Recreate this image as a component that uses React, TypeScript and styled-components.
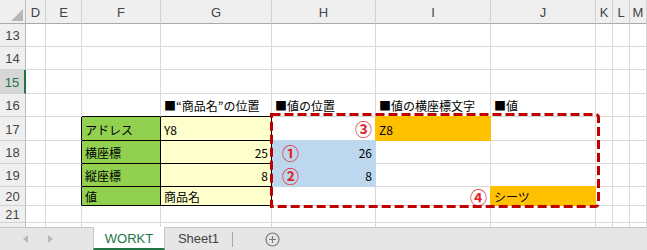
import { ReactNode } from "react";
import styled, { createGlobalStyle } from "styled-components";

const GRID = "#dadada";
const INK = "#000";
const GREEN = "#92d050";
const YELLOW = "#ffffcc";
const BLUE = "#bdd7ee";
const ORANGE = "#ffc000";
const RED = "#e0262b";
const EXCEL = "#217346";

const GlobalStyle = createGlobalStyle`
  html, body {
    margin: 0;
    padding: 0;
    background: #fff;
  }
  body {
    font-family: "Noto Sans CJK JP", "Liberation Sans", sans-serif;
    overflow: hidden;
  }
  * {
    box-sizing: border-box;
  }
`;

const Window = styled.div`
  width: 647px;
  height: 250px;
  display: flex;
  flex-direction: column;
  overflow: hidden;
`;

const Sheet = styled.div`
  position: relative;
  height: 227px;
  flex: 0 0 227px;
  overflow: hidden;
  display: grid;
  grid-template-columns: 26px 20px 36px 79px 111px 104px 115px 105px 17px 17px 17px;
  grid-template-rows: 24px 23px 23px 24px 23px 24px 23px 23px 19px 17px 20px;
`;

const Corner = styled.div`
  position: relative;
  background: #efefef;
  border-right: 1px solid #bdbdbd;
  border-bottom: 1px solid #a9a9a9;

  svg {
    position: absolute;
    right: 2px;
    bottom: 2px;
  }
`;

const ColHead = styled.div`
  background: #efefef;
  border-right: 1px solid #d2d2d2;
  border-bottom: 1px solid #a9a9a9;
  color: #444;
  font: 13px "Liberation Sans", sans-serif;
  display: flex;
  align-items: center;
  justify-content: center;
  overflow: hidden;
  padding-top: 1px;
`;

const RowHead = styled.div<{ $active?: boolean }>`
  background: ${p => (p.$active ? "#d6d6d6" : "#efefef")};
  color: ${p => (p.$active ? EXCEL : "#444")};
  border-right: ${p => (p.$active ? `2px solid ${EXCEL}` : "1px solid #bdbdbd")};
  border-bottom: 1px solid #d2d2d2;
  font: 13px "Liberation Sans", sans-serif;
  display: flex;
  align-items: center;
  justify-content: center;
  padding-top: 1px;
`;

const Cell = styled.div<{
  $fill?: string;
  $right: string;
  $bottom: string;
  $justify: string;
}>`
  background: ${p => p.$fill ?? "#fff"};
  border-right: 1px solid ${p => p.$right};
  border-bottom: 1px solid ${p => p.$bottom};
  display: flex;
  align-items: center;
  justify-content: ${p => p.$justify};
  padding: 2px 3px 0 3px;
  font-size: 12px;
  line-height: 1;
  color: #000;
  white-space: nowrap;
`;

const Mark = styled.span<{ $lead?: boolean }>`
  color: ${RED};
  font-size: 17px;
  font-weight: 700;
  line-height: 1;
  margin-left: ${p => (p.$lead ? "7px" : "0")};
  margin-top: -2px;
`;

const Frame = styled.svg`
  position: absolute;
  left: 270px;
  top: 113px;
  pointer-events: none;
`;

const TabBar = styled.div`
  flex: 1;
  background: #e6e6e6;
  border-top: 1px solid #c6c6c6;
  display: flex;
  align-items: stretch;
  font: 13px "Liberation Sans", sans-serif;
`;

const Nav = styled.div`
  width: 93px;
  display: flex;
  align-items: center;
  gap: 20px;
  padding-left: 23px;
  color: #b9b9b9;
`;

const Tab = styled.div<{ $active?: boolean; $width: number }>`
  width: ${p => p.$width}px;
  margin-top: -1px;
  display: flex;
  align-items: center;
  justify-content: center;
  background: ${p => (p.$active ? "#fff" : "transparent")};
  color: ${p => (p.$active ? EXCEL : "#444")};
  border-left: ${p => (p.$active ? "1px solid #c6c6c6" : "none")};
  border-right: ${p => (p.$active ? "1px solid #c6c6c6" : "none")};
  border-bottom: ${p => (p.$active ? `2px solid ${EXCEL}` : "none")};
  padding-top: ${p => (p.$active ? "2px" : "0")};
`;

const Divider = styled.div`
  width: 1px;
  height: 15px;
  align-self: center;
  background: #a8a8a8;
`;

const AddSheet = styled.div`
  margin-left: 32px;
  display: flex;
  align-items: center;
`;

type Spec = {
  text?: ReactNode;
  fill?: string;
  box?: boolean;
  justify?: string;
};

const COLS = ["D", "E", "F", "G", "H", "I", "J", "K", "L", "M"];
const ROWS = [
  { n: 13 },
  { n: 14 },
  { n: 15, active: true },
  { n: 16 },
  { n: 17 },
  { n: 18 },
  { n: 19 },
  { n: 20 },
  { n: 21 },
  { n: 22 },
];

const R = "flex-end";

const CELLS: Record<string, Spec> = {
  G16: { text: "■“商品名”の位置" },
  H16: { text: "■値の位置" },
  I16: { text: "■値の横座標文字" },
  J16: { text: "■値" },

  F17: { text: "アドレス", fill: GREEN, box: true },
  G17: { text: "Y8", fill: YELLOW, box: true },
  H17: { text: <Mark>③</Mark>, justify: R },
  I17: { text: "Z8", fill: ORANGE },

  F18: { text: "横座標", fill: GREEN, box: true },
  G18: { text: "25", fill: YELLOW, box: true, justify: R },
  H18: {
    text: (
      <>
        <Mark $lead>①</Mark>
        <span>26</span>
      </>
    ),
    fill: BLUE,
    justify: "space-between",
  },

  F19: { text: "縦座標", fill: GREEN, box: true },
  G19: { text: "8", fill: YELLOW, box: true, justify: R },
  H19: {
    text: (
      <>
        <Mark $lead>②</Mark>
        <span>8</span>
      </>
    ),
    fill: BLUE,
    justify: "space-between",
  },

  F20: { text: "値", fill: GREEN, box: true },
  G20: { text: "商品名", fill: YELLOW, box: true },
  I20: { text: <Mark>④</Mark>, justify: R },
  J20: { text: "シーツ", fill: ORANGE },
};

function spec(col: number, row: number): Spec {
  const key = `${COLS[col]}${ROWS[row]?.n}`;
  return CELLS[key] ?? {};
}

function edge(a: Spec, b: Spec) {
  if (a.box || b.box) return INK;
  if (a.fill) return a.fill;
  if (b.fill) return b.fill;
  return GRID;
}

function Arrow({ dir }: { dir: "left" | "right" }) {
  return (
    <svg width="5" height="8" viewBox="0 0 5 8">
      <polygon
        points={dir === "left" ? "5,0 0,4 5,8" : "0,0 5,4 0,8"}
        fill="currentColor"
      />
    </svg>
  );
}

export default function App() {
  return (
    <Window>
      <GlobalStyle />
      <Sheet>
        <Corner>
          <svg width="12" height="12" viewBox="0 0 12 12">
            <polygon points="12,0 12,12 0,12" fill="#b7b7b7" />
          </svg>
        </Corner>
        {COLS.map(c => (
          <ColHead key={c}>{c}</ColHead>
        ))}

        {ROWS.map((r, ri) => (
          <Row key={r.n} index={ri} active={r.active} n={r.n} />
        ))}

        <Frame width="331" height="96" viewBox="0 0 331 96">
          <path
            d="M1.5 1.5 H325.5 A3 3 0 0 1 328.5 4.5 V90.5 A3 3 0 0 1 325.5 93.5 H1.5 Z"
            fill="none"
            stroke="#c00000"
            strokeWidth="3"
            strokeDasharray="9 4"
          />
        </Frame>
      </Sheet>

      <TabBar>
        <Nav>
          <Arrow dir="left" />
          <Arrow dir="right" />
        </Nav>
        <Tab $active $width={72}>
          WORKT
        </Tab>
        <Tab $width={67}>Sheet1</Tab>
        <Divider />
        <AddSheet>
          <svg width="15" height="15" viewBox="0 0 15 15">
            <circle cx="7.5" cy="7.5" r="6.5" fill="none" stroke="#7a7a7a" strokeWidth="1.2" />
            <path d="M7.5 4 V11 M4 7.5 H11" stroke="#7a7a7a" strokeWidth="1.2" />
          </svg>
        </AddSheet>
      </TabBar>
    </Window>
  );
}

function Row({ index, active, n }: { index: number; active?: boolean; n: number }) {
  return (
    <>
      <RowHead $active={active}>{n}</RowHead>
      {COLS.map((c, ci) => {
        const s = spec(ci, index);
        const right = ci + 1 < COLS.length ? edge(s, spec(ci + 1, index)) : GRID;
        const bottom = edge(s, spec(ci, index + 1));
        return (
          <Cell
            key={c}
            $fill={s.fill}
            $right={right}
            $bottom={bottom}
            $justify={s.justify ?? "flex-start"}
          >
            {s.text}
          </Cell>
        );
      })}
    </>
  );
}
